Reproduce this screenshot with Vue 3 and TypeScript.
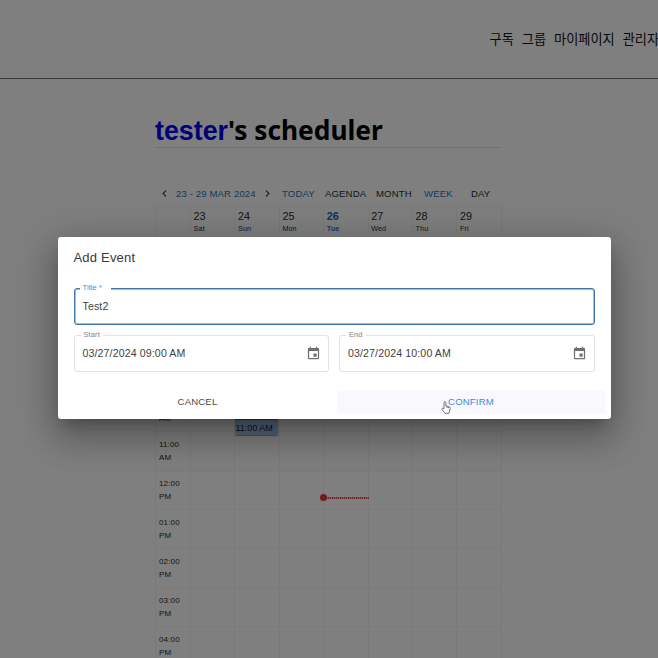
<script setup lang="ts">
interface Day { num: number; name: string; today?: boolean }

const menu: string[] = ['구독', '그룹', '마이페이지', '관리자']
const days: Day[] = [
  { num: 23, name: 'Sat' },
  { num: 24, name: 'Sun' },
  { num: 25, name: 'Mon' },
  { num: 26, name: 'Tue', today: true },
  { num: 27, name: 'Wed' },
  { num: 28, name: 'Thu' },
  { num: 29, name: 'Fri' },
]
const hours: string[] = [
  '06:00 AM', '07:00 AM', '08:00 AM', '09:00 AM', '10:00 AM', '11:00 AM',
  '12:00 PM', '01:00 PM', '02:00 PM', '03:00 PM', '04:00 PM',
]
const fields = [
  { label: 'Start', value: '03/27/2024 09:00 AM' },
  { label: 'End', value: '03/27/2024 10:00 AM' },
]
</script>

<template>
  <div class="page">
    <header class="topbar">
      <nav class="menu">
        <span v-for="m in menu" :key="m">{{ m }}</span>
      </nav>
    </header>

    <main class="content">
      <h1 class="heading"><span class="user">tester</span><span class="rest">'s scheduler</span></h1>

      <div class="toolbar">
        <svg class="chev" viewBox="0 0 24 24"><path d="M15.41 7.41 14 6l-6 6 6 6 1.41-1.41L10.83 12z" /></svg>
        <span class="range blue">23 - 29 MAR 2024</span>
        <svg class="chev" viewBox="0 0 24 24"><path d="M10 6 8.59 7.41 13.17 12l-4.58 4.59L10 18l6-6z" /></svg>
        <span class="today-btn blue">TODAY</span>
        <span class="agenda">AGENDA</span>
        <span class="month">MONTH</span>
        <span class="week blue">WEEK</span>
        <span>DAY</span>
      </div>

      <div class="grid">
        <div class="cell head"></div>
        <div v-for="d in days" :key="d.num" class="cell head" :class="{ today: d.today }">
          <span class="num">{{ d.num }}</span>
          <span class="name">{{ d.name }}</span>
        </div>
        <template v-for="h in hours" :key="h">
          <div class="cell time">{{ h }}</div>
          <div v-for="d in days" :key="d.num" class="cell">
            <div v-if="h === '10:00 AM' && d.num === 24" class="event">11:00 AM</div>
            <div v-if="h === '12:00 PM' && d.num === 26" class="now"></div>
          </div>
        </template>
      </div>
    </main>

    <div class="backdrop">
      <section class="dialog">
        <h2 class="dialog-title">Add Event</h2>
        <div class="field focused">
          <span class="label">Title *</span>
          <span class="value">Test2</span>
        </div>
        <div class="row">
          <div v-for="f in fields" :key="f.label" class="field">
            <span class="label">{{ f.label }}</span>
            <span class="value">{{ f.value }}</span>
            <svg class="cal" viewBox="0 0 24 24"><path d="M17 12h-5v5h5v-5zM16 1v2H8V1H6v2H5c-1.11 0-1.99.9-1.99 2L3 19c0 1.1.89 2 2 2h14c1.1 0 2-.9 2-2V5c0-1.1-.9-2-2-2h-1V1h-2zm3 18H5V8h14v11z" /></svg>
          </div>
        </div>
        <div class="actions">
          <button class="btn">CANCEL</button>
          <button class="btn confirm">CONFIRM</button>
        </div>
      </section>
      <svg class="pointer" viewBox="0 0 10 13">
        <path d="M3 7.8V1.6C3 .3 4.8.3 4.8 1.6V5l3.3.8c.8.2 1.2.7 1.1 1.5L8.7 10 7.8 12.3H4L1 8.7c-.8-1 .4-1.9 1.2-1.2z" />
        <path d="M6.2 5.5v1.4M7.7 5.9v1.3" />
      </svg>
    </div>
  </div>
</template>

<style>
body { margin: 0; overflow: hidden; }
</style>

<style scoped>
* { box-sizing: border-box; }
.page {
  position: relative;
  width: 658px;
  height: 658px;
  overflow: hidden;
  background: #fff;
  color: #2c2c2c;
  font-family: "Liberation Sans", Arial, sans-serif;
}
.topbar {
  height: 79px;
  border-bottom: 1px solid #707070;
  overflow: hidden;
}
.menu {
  display: flex;
  gap: 8px;
  padding: 29px 0 0 489.5px;
  font: 13.2px/19px "Noto Sans CJK KR", sans-serif;
  color: #111;
  white-space: nowrap;
}
.content { width: 347px; margin-left: 155px; }
.heading {
  display: flex;
  align-items: baseline;
  height: 69px;
  margin: 0;
  padding-top: 33px;
  border-bottom: 1px solid #e4e4e4;
  font-size: 26.8px;
  line-height: 36px;
  color: #000;
  white-space: nowrap;
}
.user { color: #0000f0; }
.rest { font-family: "Noto Sans", sans-serif; font-size: 26.3px; }
.toolbar {
  display: flex;
  align-items: center;
  height: 58px;
  padding: 33px 0 0 3px;
  font-size: 9.6px;
  letter-spacing: 0.12px;
  white-space: nowrap;
}
.chev { width: 13px; height: 13px; fill: #333; }
.blue { color: #2a74c0; }
.range { width: 81px; margin: 0 4px 0 5px; }
.today-btn { width: 43px; margin-left: 8px; }
.agenda { width: 51px; }
.month { width: 48px; }
.week { width: 47px; }
.grid {
  display: grid;
  grid-template-columns: 35px repeat(7, 44.4px);
  grid-template-rows: 30px;
  grid-auto-rows: 39px;
  border: solid #f4f4f4;
  border-width: 1px 0 0 1px;
}
.cell {
  position: relative;
  border: solid #f4f4f4;
  border-width: 0 1px 1px 0;
}
.head { display: flex; flex-direction: column; padding: 3px 0 0 2.6px; }
.num { font-size: 10.8px; line-height: 13px; }
.name { font-size: 7.2px; line-height: 12px; letter-spacing: 0.12px; }
.today { color: #1264bd; font-weight: bold; }
.today .name { font-weight: normal; -webkit-text-stroke: 0.2px #1264bd; }
.time { padding: 6px 6px 0 3px; font-size: 8px; line-height: 13px; letter-spacing: 0.15px; }
.event {
  position: absolute;
  z-index: 1;
  top: 4px;
  left: 0;
  width: 43px;
  height: 38px;
  padding-top: 24px;
  border-radius: 2px;
  background: linear-gradient(#2a6fc0 23px, #a9cbea 23px);
  box-shadow: 0 1px 1px #999;
  font-size: 9px;
  line-height: 14px;
  white-space: nowrap;
  color: #102438;
}
.now {
  position: absolute;
  z-index: 1;
  top: 26px;
  left: 0;
  width: 45px;
  height: 2px;
  background: repeating-linear-gradient(90deg, #e85050 0 1px, #ecb4b4 1px 2px);
}
.now::before {
  content: "";
  position: absolute;
  top: -3px;
  left: -4px;
  width: 7px;
  height: 7px;
  border-radius: 50%;
  background: #dc3838;
}
.backdrop {
  position: absolute;
  z-index: 5;
  inset: 0;
  padding: 237px 0 0 57.5px;
  background: rgba(0, 0, 0, 0.5);
}
.dialog {
  width: 553px;
  height: 182px;
  padding: 11px 16px 0;
  border-radius: 3px;
  background: #fff;
  box-shadow: 0 9px 13px -6px rgba(0, 0, 0, 0.24), 0 20px 32px 3px rgba(0, 0, 0, 0.16), 0 8px 40px 7px rgba(0, 0, 0, 0.18);
}
.dialog-title {
  height: 40px;
  margin: 0;
  font-size: 13px;
  font-weight: normal;
  line-height: 20px;
  letter-spacing: 0.2px;
  color: #3a3a3a;
}
.field {
  position: relative;
  display: flex;
  flex: 1;
  align-items: center;
  height: 37px;
  padding: 0 8px 1px;
  border: 1px solid #e2e2e2;
  border-radius: 3px;
  font-size: 10.6px;
  letter-spacing: 0.12px;
  color: #3f3f3f;
}
.focused { border: 1px solid #4578aa; box-shadow: inset 0 0 0 0.5px #4578aa; }
.label {
  position: absolute;
  top: -6px;
  left: 6px;
  padding: 0 3px;
  background: #fff;
  font-size: 7.5px;
  line-height: 10px;
  letter-spacing: 0.1px;
  color: #828282;
}
.focused .label { left: 5px; padding: 0 9px 0 3px; color: #428bd5; }
.value { flex: 1; }
.row { display: flex; gap: 10px; padding-top: 10px; }
.cal { width: 15px; height: 15px; margin-right: -1px; fill: #707070; }
.actions { display: flex; margin: 18px -11px 0 -15px; }
.btn {
  flex: 1;
  height: 24px;
  padding: 0 0 2px;
  border: 0;
  border-radius: 3px;
  background: transparent;
  font: 9.6px "Liberation Sans", Arial, sans-serif;
  letter-spacing: 0.15px;
  color: #4a4a4a;
}
.confirm { flex: 0 0 269px; background: #f8f8fd; color: #3f8bd2; }
.pointer {
  position: absolute;
  left: 441px;
  top: 401px;
  width: 10px;
  height: 13px;
  fill: #fff;
  stroke: #555;
  stroke-width: 0.8;
}
</style>
